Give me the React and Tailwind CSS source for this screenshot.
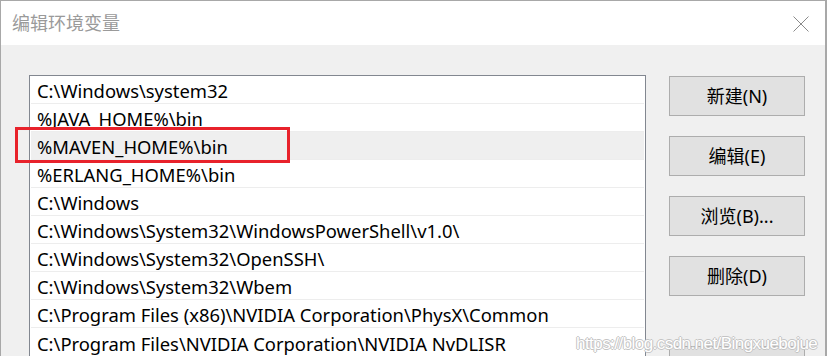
import React from 'react';

const paths = [
  'C:\\Windows\\system32',
  '%JAVA_HOME%\\bin',
  '%MAVEN_HOME%\\bin',
  '%ERLANG_HOME%\\bin',
  'C:\\Windows',
  'C:\\Windows\\System32\\WindowsPowerShell\\v1.0\\',
  'C:\\Windows\\System32\\OpenSSH\\',
  'C:\\Windows\\System32\\Wbem',
  'C:\\Program Files (x86)\\NVIDIA Corporation\\PhysX\\Common',
  'C:\\Program Files\\NVIDIA Corporation\\NVIDIA NvDLISR',
];

const buttons = ['新建(N)', '编辑(E)', '浏览(B)...', '删除(D)'];

const font = { fontFamily: '"Noto Sans", "Noto Sans CJK SC", sans-serif' };

export default function App() {
  return (
    <div
      className="relative w-[827px] h-[356px] overflow-hidden bg-[#f0f0f0] border-t border-r-2 border-l border-[#a8a8a8]"
      style={font}
    >
      {/* Title bar */}
      <div className="h-[44px] bg-white flex items-center justify-between pl-[11px] pr-[16px]">
        <span className="text-[18px] text-[#9a9a9a] leading-none">编辑环境变量</span>
        <svg width="16" height="16" viewBox="0 0 16 16" className="mt-[1px]">
          <path d="M0.5 0.5 L15.5 15.5 M15.5 0.5 L0.5 15.5" stroke="#8a8a8a" strokeWidth="1" fill="none" />
        </svg>
      </div>

      <div className="flex pl-[28px] pt-[30px]">
        {/* List */}
        <div className="w-[617px] h-[300px] border border-b-0 border-[#828790] bg-white pl-[1px] pr-[1px]">
          {paths.map((p, i) => (
            <div
              key={p}
              className={`h-[28px] flex items-center pl-[6px] pt-[3px] text-[18.4px] text-black whitespace-nowrap ${
                i === 2 ? 'bg-[#efefef]' : ''
              } ${i < paths.length - 1 ? 'border-b border-[#ededed]' : ''}`}
            >
              {p}
            </div>
          ))}
        </div>

        {/* Buttons */}
        <div className="ml-[23px] flex flex-col pt-[1px]">
          <div className="flex flex-col gap-[20px]">
            {buttons.map((b) => (
              <button
                key={b}
                className="w-[136px] h-[40px] bg-[#e1e1e1] border border-[#adadad] text-[18px] text-black flex items-center justify-center"
              >
                {b}
              </button>
            ))}
          </div>
          <button className="mt-[50px] w-[136px] h-[40px] bg-[#e1e1e1] border border-[#adadad] text-[18px] text-black flex items-center justify-center">
            上移(U)
          </button>
        </div>
      </div>

      {/* Highlight box */}
      <div className="absolute left-[14px] top-[126px] w-[275px] h-[36px] border-[3px] border-[#e8222b]" />

      {/* Watermark */}
      <div
        className="absolute z-10 left-[575px] top-[330px] text-[17px] tracking-[-0.55px] text-white whitespace-nowrap"
        style={{
          fontFamily: '"Liberation Sans", sans-serif',
          textShadow: '1px 0 0 #c4c4c4, -1px 0 0 #c4c4c4, 0 1px 0 #c4c4c4, 0 -1px 0 #c4c4c4',
        }}
      >
        https://blog.csdn.net/Bingxuebojue
      </div>
    </div>
  );
}
